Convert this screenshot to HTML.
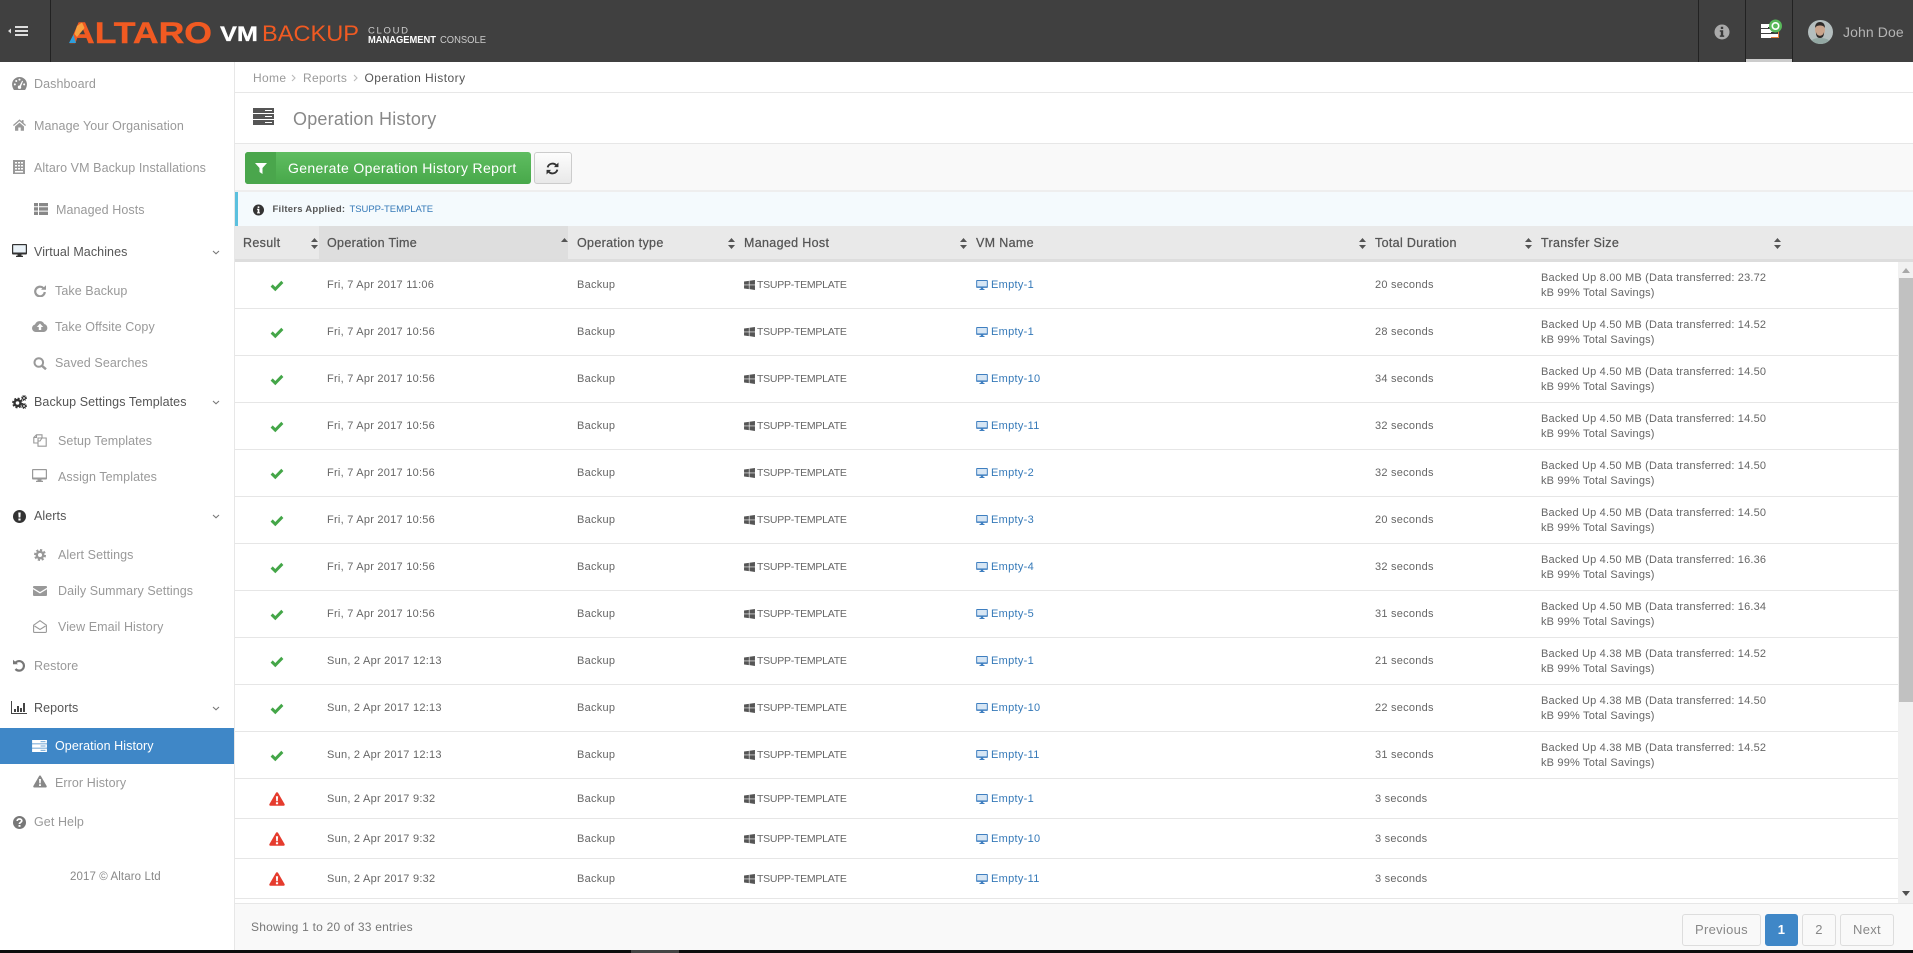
<!DOCTYPE html>
<html lang="en"><head><meta charset="utf-8"><title>Operation History</title>
<style>
html,body{margin:0;padding:0}
body{position:relative;width:1913px;height:953px;overflow:hidden;background:#fff;font-family:"Liberation Sans",sans-serif;color:#666}
.a,.s,.r,.r span,.r a,.r svg,.r div{position:absolute}
.s{white-space:nowrap;line-height:20px;font-size:12.5px;letter-spacing:.08px;color:#999}
.d{color:#555}
.th{position:absolute;top:233px;white-space:nowrap;line-height:20px;font-size:12.5px;letter-spacing:.33px;font-weight:normal;-webkit-text-stroke:.25px #555;color:#555}
.r{left:235px;width:1663px;height:46px;border-bottom:1px solid #e6e6e6;font-size:11px;letter-spacing:.25px;color:#666;line-height:47px;white-space:nowrap}
.r.e{height:39px;line-height:41px}
.r a{color:#3579b8;text-decoration:none;left:756px;letter-spacing:.3px}
.r .z{left:1306px;top:9px;line-height:15px;white-space:nowrap;font-size:11px;letter-spacing:.18px}
.r svg.c{left:35px;top:18px}
.r svg.w{left:509px;top:18px}
.r svg.m{left:741px;top:18px}
.r.e svg.c{left:34px;top:13px}
.r.e svg.w{top:15px}
.r.e svg.m{top:15px}
.t1{left:92px}.t2{left:342px}.t3{left:522px;font-size:10.5px;letter-spacing:-.25px}.t4{left:1140px}
.pg{position:absolute;top:914px;height:30px;border:1px solid #ddd;border-radius:3px;line-height:30px;text-align:center;font-size:13px;letter-spacing:.3px;color:#888;background:#f9f9f9;box-sizing:content-box}
</style></head><body>
<svg width="0" height="0" style="position:absolute">
<symbol id="chk" viewBox="0 0 14 12"><path fill="#44a648" d="M.6 6.600 2.700 4.400 5.300 7 11.300.8 13.400 3 5.300 11.200z"/></symbol>
<symbol id="warn" viewBox="0 0 16 14"><path fill="#e53c2e" d="M8 .2c.5 0 .9.3 1.100.7l6.500 11.200c.4.800-.1 1.700-1 1.700H1.400c-.9 0-1.400-.9-1-1.700L6.900.9C7.100.5 7.500.2 8 .2z"/><path fill="#fff" d="M6.900 4.200h2.200l-.3 5H7.200zM6.900 10.200h2.200v2H6.900z"/></symbol>
<symbol id="win" viewBox="0 0 12 11"><path fill="#555" d="M0 1.700 5.300.9v4.200H0zM6 .8 12 0v5.100H6zM0 5.800h5.300v4.300L0 9.300zM6 5.800h6V11l-6-.9z"/></symbol>
<symbol id="mon" viewBox="0 0 14 12"><path fill="#3f7fc0" d="M1 0h12a1 1 0 0 1 1 1v7.500a1 1 0 0 1-1 1H8.500v1.300h1.500V12H4v-1.200h1.500V9.500H1a1 1 0 0 1-1-1V1a1 1 0 0 1 1-1z"/><path fill="#d7e6f4" d="M1.200 1.200h11.600v6.500H1.200z"/></symbol>
<symbol id="sort" viewBox="0 0 7 11"><path fill="#555" d="M3.500 0 7 4H0zM0 7h7l-3.500 4z"/></symbol>
<symbol id="srv" viewBox="0 0 21 17"><path d="M0 0h21v5H0zM0 6h21v5H0zM0 12h21v5H0z"/><path fill="#fff" d="M12 2h7v1h-7zM12 8h7v1h-7zM12 14h7v1h-7z"/></symbol>
</svg>

<!-- top bar -->
<div class="a" style="left:0;top:0;width:1913px;height:62px;background:#404040"></div>
<div class="a" style="left:50px;top:0;width:1px;height:62px;background:#222"></div>
<div class="a" style="left:1698px;top:0;width:1px;height:62px;background:#222"></div>
<div class="a" style="left:1745px;top:0;width:1px;height:62px;background:#222"></div>
<div class="a" style="left:1792px;top:0;width:1px;height:62px;background:#222"></div>
<div class="a" style="left:1746px;top:59px;width:46px;height:3px;background:#ccc"></div>
<svg class="a" style="left:8px;top:25px" width="21" height="12" viewBox="0 0 21 12"><path fill="#ddd" d="M0 6 3 3.500v5zM7 1h13v2H7zM7 5h13v2H7zM7 9h13v2H7z"/></svg>
<svg class="a" style="left:60px;top:15px" width="440" height="35" viewBox="60 15 440 35" font-family="Liberation Sans, sans-serif">
<text x="69" y="43" font-size="30" font-weight="bold" fill="#f15a22" stroke="#f15a22" stroke-width=".4" textLength="143" lengthAdjust="spacingAndGlyphs">ALTARO</text>
<path fill="#f9a03f" d="M77 26 82 22.500 84.500 28 77 37 74.500 34z"/>
<path fill="#2e9fdc" d="M69 43 73.500 34.500 76 43z"/>
<text x="220" y="41" font-size="21" font-weight="bold" fill="#fff" stroke="#fff" stroke-width=".3" textLength="38" lengthAdjust="spacingAndGlyphs">VM</text>
<text x="262" y="41" font-size="22" fill="#f15a22" textLength="97" lengthAdjust="spacingAndGlyphs">BACKUP</text>
<text x="368" y="33.500" font-size="9.500" fill="#ccc" textLength="40">CLOUD</text>
<text x="368" y="43" font-size="10.500" font-weight="bold" fill="#fff" textLength="68" lengthAdjust="spacingAndGlyphs">MANAGEMENT</text>
<text x="440" y="43" font-size="10.500" fill="#ccc" textLength="46" lengthAdjust="spacingAndGlyphs">CONSOLE</text>
</svg>
<svg class="a" style="left:1714px;top:24px" width="16" height="16" viewBox="0 0 16 16"><circle cx="8" cy="8" r="7.500" fill="#aaa"/><path fill="#3a3a3a" d="M6.800 2.800h2.400v2.200H6.800zM5.800 6.200h3.400v5.200h1v1.500H5.800v-1.500h1V7.700h-1z"/></svg>
<svg class="a" style="left:1761px;top:19px" width="22" height="20" viewBox="0 0 22 20"><path fill="#fff" d="M0 5h18v4H0zM0 10h18v4H0zM0 15h18v4H0z"/><path fill="#333" d="M7 8h10v1H7zM10 13h7v1H10z"/><path fill="#e8803c" d="M17 10h1v9h-1zM10 18h8v1h-8z"/><circle cx="14.500" cy="7" r="6.500" fill="#58b95a"/><circle cx="14.500" cy="7" r="3.200" fill="none" stroke="#fff" stroke-width="1.600"/></svg>
<svg class="a" style="left:1808px;top:20px" width="25" height="24" viewBox="0 0 25 24"><defs><clipPath id="av"><ellipse cx="12.500" cy="12" rx="12.500" ry="12"/></clipPath></defs><g clip-path="url(#av)"><rect width="25" height="24" fill="#b4bebe"/><path fill="#93a8a3" d="M2 24c1-5 5-6 10-6s10 1 11 6z"/><ellipse cx="12" cy="10" rx="5" ry="6.500" fill="#c9a48c"/><path fill="#2e2a28" d="M7 8c0-4 2-6 5-6s5 2 5 6c-1-2-3-2.500-5-2.500S8 6 7 8zM8 12c1 5 7 5 8 0 0 4-1 6-4 6s-4-2-4-6z"/></g></svg>
<div class="s" style="left:1843px;top:21.500px;font-size:14px;letter-spacing:.1px;color:#b5b5b5">John Doe</div>

<!-- sidebar -->
<div class="a" style="left:234px;top:62px;width:1px;height:888px;background:#e7e7e7"></div>

<svg class="a" style="left:12px;top:77px" width="15" height="13" viewBox="0 0 16 14"><path fill="#888" d="M8 0a8 8 0 0 0-8 8c0 2.300.9 4.400 2 6h12c1.100-1.600 2-3.700 2-6a8 8 0 0 0-8-8z"/><g fill="#fff"><circle cx="3" cy="8" r="1.100"/><circle cx="4.500" cy="4.300" r="1.100"/><circle cx="8" cy="2.800" r="1.100"/><circle cx="13" cy="8" r="1.100"/><circle cx="8" cy="11" r="1.800"/><path d="M7.500 10.500 10.800 4l1 .4-2.600 6.800z"/></g></svg>
<div class="s" style="left:34px;top:74px">Dashboard</div>

<svg class="a" style="left:13px;top:119px" width="13" height="12" viewBox="0 0 16 14"><path fill="#999" d="M8 0 0 7l1 1.200L8 2.300l7 5.900L16 7l-3-2.600V1h-2.200v1.500zM2.500 8.800V14h4v-4h3v4h4V8.800L8 4z"/></svg>
<div class="s" style="left:34px;top:116px">Manage Your Organisation</div>

<svg class="a" style="left:13px;top:160px" width="12" height="14" viewBox="0 0 12 14"><path fill="#999" d="M0 0h12v14H0z"/><path fill="#fff" d="M2 2h2v1.500H2zM5 2h2v1.500H5zM8 2h2v1.500H8zM2 5h2v1.500H2zM5 5h2v1.500H5zM8 5h2v1.500H8zM2 8h2v1.500H2zM5 8h2v1.500H5zM8 8h2v1.500H8zM2 11h8v1.500H2z"/></svg>
<div class="s" style="left:34px;top:158px">Altaro VM Backup Installations</div>

<svg class="a" style="left:34px;top:203px" width="14" height="12" viewBox="0 0 14 12"><path fill="#888" d="M0 0h4v3.300H0zM5 0h9v3.300H5zM0 4.300h4v3.300H0zM5 4.300h9v3.300H5zM0 8.600h4V12H0zM5 8.600h9V12H5z"/></svg>
<div class="s" style="left:56px;top:200px">Managed Hosts</div>

<svg class="a" style="left:12px;top:244px" width="15" height="13" viewBox="0 0 15 13"><path fill="#333" d="M1 0h13a1 1 0 0 1 1 1v8.500a1 1 0 0 1-1 1H9.500v1.300H11V13H4v-1.200h1.500v-1.300H1a1 1 0 0 1-1-1V1a1 1 0 0 1 1-1z"/><path fill="#eaf2f8" d="M1.200 1.200h12.600v7.300H1.200z"/></svg>
<div class="s d" style="left:34px;top:242px">Virtual Machines</div>
<svg class="a" style="left:212px;top:250px" width="8" height="5" viewBox="0 0 8 5"><path fill="none" stroke="#777" stroke-width="1.100" d="M1 1l3 2.800L7 1"/></svg>

<svg class="a" style="left:34px;top:285px" width="12" height="12" viewBox="0 0 12 12"><path fill="none" stroke="#999" stroke-width="2.200" d="M9.300 3A4.800 4.800 0 1 0 10.800 7"/><path fill="#999" d="M7 4.800 12 .2v4.600z"/></svg>
<div class="s" style="left:55px;top:281px">Take Backup</div>

<svg class="a" style="left:32px;top:320px" width="16" height="12" viewBox="0 0 16 12"><path fill="#999" d="M4 12a3.800 3.800 0 0 1-1-7.500A5 5 0 0 1 12.300 4 4.100 4.100 0 0 1 12 12z"/><path fill="#fff" d="M8 3.500 11.200 7H9.200v3H6.800V7H4.800z"/></svg>
<div class="s" style="left:55px;top:317px">Take Offsite Copy</div>

<svg class="a" style="left:33px;top:357px" width="14" height="13" viewBox="0 0 14 13"><circle cx="5.800" cy="5.500" r="4.300" fill="none" stroke="#999" stroke-width="2"/><path stroke="#999" stroke-width="2.400" d="M9 8.800 13 12.300"/></svg>
<div class="s" style="left:55px;top:353px">Saved Searches</div>

<svg class="a" style="left:12px;top:395px" width="15" height="14" viewBox="0 0 15 14"><g fill="none" stroke="#333"><circle cx="5.500" cy="8" r="3" stroke-width="2.400"/><circle cx="5.500" cy="8" r="4.700" stroke-width="1.400" stroke-dasharray="2 1.700"/><circle cx="12" cy="3" r="1.500" stroke-width="1.200"/><circle cx="12" cy="3" r="2.500" stroke-width=".9" stroke-dasharray="1 1"/><circle cx="12" cy="11" r="1.500" stroke-width="1.200"/><circle cx="12" cy="11" r="2.500" stroke-width=".9" stroke-dasharray="1 1"/></g></svg>
<div class="s d" style="left:34px;top:392px">Backup Settings Templates</div>
<svg class="a" style="left:212px;top:400px" width="8" height="5" viewBox="0 0 8 5"><path fill="none" stroke="#777" stroke-width="1.100" d="M1 1l3 2.800L7 1"/></svg>

<svg class="a" style="left:33px;top:434px" width="14" height="13" viewBox="0 0 14 13"><path fill="none" stroke="#999" stroke-width="1.100" d="M5 9H.8V3.500L3.500.8H9v3M5 4h4.500l3.700 0v8.200H5z"/><path fill="none" stroke="#999" stroke-width="1.100" d="M.8 3.500h2.700V.8M9 4 7 7H5"/></svg>
<div class="s" style="left:58px;top:431px">Setup Templates</div>

<svg class="a" style="left:32px;top:469px" width="15" height="13" viewBox="0 0 15 13"><path fill="#999" d="M1 0h13a1 1 0 0 1 1 1v8.500a1 1 0 0 1-1 1H9.500v1.300H11V13H4v-1.200h1.500v-1.300H1a1 1 0 0 1-1-1V1a1 1 0 0 1 1-1z"/><path fill="#fff" d="M1.200 1.200h12.600v7.300H1.200z"/></svg>
<div class="s" style="left:58px;top:467px">Assign Templates</div>

<svg class="a" style="left:12.500px;top:509.500px" width="13" height="13" viewBox="0 0 13 13"><circle cx="6.500" cy="6.500" r="6.500" fill="#333"/><path fill="#fff" d="M5.300 2.500h2.400l-.3 5H5.600zM5.400 8.500h2.200v2H5.400z"/></svg>
<div class="s d" style="left:34px;top:506px">Alerts</div>
<svg class="a" style="left:212px;top:514px" width="8" height="5" viewBox="0 0 8 5"><path fill="none" stroke="#777" stroke-width="1.100" d="M1 1l3 2.800L7 1"/></svg>

<svg class="a" style="left:34px;top:549px" width="12" height="12" viewBox="0 0 12 12"><circle cx="6" cy="6" r="3.200" fill="none" stroke="#999" stroke-width="2.400"/><circle cx="6" cy="6" r="5" fill="none" stroke="#999" stroke-width="2" stroke-dasharray="2.200 1.700"/></svg>
<div class="s" style="left:58px;top:545px">Alert Settings</div>

<svg class="a" style="left:33px;top:586px" width="14" height="10" viewBox="0 0 14 10"><path fill="#999" d="M1 0h12a1 1 0 0 1 1 1v.8L7 6 0 1.800V1a1 1 0 0 1 1-1zM0 3.300 7 7.500l7-4.200V9a1 1 0 0 1-1 1H1a1 1 0 0 1-1-1z"/></svg>
<div class="s" style="left:58px;top:581px">Daily Summary Settings</div>

<svg class="a" style="left:33px;top:620px" width="14" height="13" viewBox="0 0 14 13"><path fill="none" stroke="#999" stroke-width="1.100" d="M.6 5.200 7 .7l6.400 4.500v6.400a.8.800 0 0 1-.8.800H1.400a.8.800 0 0 1-.8-.8zM1.500 6 7 9.500 12.500 6"/></svg>
<div class="s" style="left:58px;top:617px">View Email History</div>

<svg class="a" style="left:13px;top:659px" width="12" height="13" viewBox="0 0 12 12"><path fill="none" stroke="#777" stroke-width="2.200" d="M2.700 3A4.800 4.800 0 1 1 2.500 9.500"/><path fill="#777" d="M5 4.800 0 .2v4.600z"/></svg>
<div class="s" style="left:34px;top:656px">Restore</div>

<svg class="a" style="left:11px;top:701px" width="16" height="13" viewBox="0 0 16 13"><path fill="#444" d="M0 0h1v12h15v1H0zM3 8h2v3H3zM6 5h2v6H6zM9 7h2v4H9zM12 2h2v9h-2z"/></svg>
<div class="s d" style="left:34px;top:698px">Reports</div>
<svg class="a" style="left:212px;top:706px" width="8" height="5" viewBox="0 0 8 5"><path fill="none" stroke="#777" stroke-width="1.100" d="M1 1l3 2.800L7 1"/></svg>

<div class="a" style="left:0;top:728px;width:234px;height:36px;background:#3f87c7"></div>
<svg class="a" style="left:32px;top:740px" width="15" height="12" viewBox="0 0 21 17"><path fill="#fff" d="M0 0h21v5H0zM0 6h21v5H0zM0 12h21v5H0z"/><path fill="#3f87c7" d="M12 2h7v1h-7zM12 8h7v1h-7zM12 14h7v1h-7z"/></svg>
<div class="s" style="left:55px;top:736px;color:#fff">Operation History</div>

<svg class="a" style="left:33px;top:775px" width="14" height="13" viewBox="0 0 16 14"><path fill="#888" d="M8 .2c.5 0 .9.3 1.100.7l6.500 11.200c.4.800-.1 1.700-1 1.700H1.400c-.9 0-1.400-.9-1-1.700L6.900.9C7.100.5 7.500.2 8 .2z"/><path fill="#fff" d="M6.900 4.200h2.200l-.3 5H7.200zM6.900 10.200h2.200v2H6.900z"/></svg>
<div class="s" style="left:55px;top:773px">Error History</div>

<svg class="a" style="left:12.500px;top:815.500px" width="13" height="13" viewBox="0 0 13 13"><circle cx="6.500" cy="6.500" r="6.500" fill="#777"/><path fill="none" stroke="#fff" stroke-width="1.700" d="M4.200 5c0-1.300 1-2 2.300-2s2.300.8 2.300 1.900C8.800 6.300 6.500 6.300 6.500 8"/><path fill="#fff" d="M5.500 9h2v1.800h-2z"/></svg>
<div class="s" style="left:34px;top:812px">Get Help</div>

<div class="s" style="left:70px;top:867px;font-size:11.500px;letter-spacing:.1px;color:#888">2017 © Altaro Ltd</div>

<!-- breadcrumb -->
<div class="s" style="left:253px;top:68px;font-size:12px;letter-spacing:.35px">Home</div>
<svg class="a" style="left:291px;top:74px" width="5" height="8" viewBox="0 0 5 8"><path fill="none" stroke="#bbb" stroke-width="1.100" d="M1 1l3 3-3 3"/></svg>
<div class="s" style="left:303px;top:68px;font-size:12px;letter-spacing:.3px">Reports</div>
<svg class="a" style="left:353px;top:74px" width="5" height="8" viewBox="0 0 5 8"><path fill="none" stroke="#bbb" stroke-width="1.100" d="M1 1l3 3-3 3"/></svg>
<div class="s" style="left:364.500px;top:68px;font-size:12px;letter-spacing:.45px;color:#555">Operation History</div>
<div class="a" style="left:235px;top:92px;width:1678px;height:1px;background:#e7e7e7"></div>

<!-- title -->
<svg class="a" style="left:253px;top:108px;fill:#555" width="21" height="17"><use href="#srv"/></svg>
<div class="s" style="left:293px;top:109px;font-size:18px;letter-spacing:.2px;color:#888">Operation History</div>
<div class="a" style="left:235px;top:143px;width:1678px;height:1px;background:#e7e7e7"></div>

<!-- toolbar -->
<div class="a" style="left:235px;top:144px;width:1678px;height:46px;background:#f9f9f9"></div>
<div class="a" style="left:235px;top:190px;width:1678px;height:2px;background:#eee"></div>
<div class="a" style="left:245px;top:152px;width:286px;height:32px;border-radius:3px;background:linear-gradient(#5fbd61,#48a84a)"></div>
<div class="a" style="left:245px;top:152px;width:31px;height:32px;border-radius:3px 0 0 3px;background:#4aa64c"></div>
<svg class="a" style="left:255px;top:163px" width="12" height="11" viewBox="0 0 12 11"><path fill="#fff" d="M0 0h12L7.500 5v6l-3-2V5z"/></svg>
<div class="s" style="left:288px;top:157.500px;font-size:14px;letter-spacing:.35px;color:#fff">Generate Operation History Report</div>
<div class="a" style="left:534px;top:152px;width:36px;height:30px;border:1px solid #ccc;border-radius:3px;background:linear-gradient(#fdfdfd,#e9e9e9)"></div>
<svg class="a" style="left:546px;top:162px" width="13" height="13" viewBox="0 0 12 12"><path fill="none" stroke="#333" stroke-width="1.700" d="M1.500 5A4.700 4.700 0 0 1 9.500 3M10.500 7A4.700 4.700 0 0 1 2.500 9"/><path fill="#333" d="M11.500.5v4.200H7.300zM.5 11.500V7.300h4.200z"/></svg>

<!-- filters -->
<div class="a" style="left:235px;top:192px;width:1678px;height:34px;background:#f4fafd"></div>
<div class="a" style="left:235px;top:192px;width:3px;height:34px;background:#5bc0de"></div>
<svg class="a" style="left:253px;top:204px" width="11" height="12" viewBox="0 0 16 16"><circle cx="8" cy="8" r="8" fill="#333"/><path fill="#fff" d="M6.800 2.800h2.400v2.200H6.800zM5.800 6.200h3.400v5.200h1v1.500H5.800v-1.500h1V7.700h-1z"/></svg>
<div class="s" style="left:272.500px;top:199.500px;font-size:9.500px;letter-spacing:.25px;font-weight:bold;color:#555">Filters Applied:</div>
<div class="s" style="left:349.500px;top:199.500px;font-size:9.500px;letter-spacing:-.05px;color:#3579b8">TSUPP-TEMPLATE</div>

<!-- table header -->
<div class="a" style="left:235px;top:226px;width:1678px;height:33px;background:#e9e9e9"></div>
<div class="a" style="left:319px;top:226px;width:249px;height:33px;background:#dedede"></div>
<div class="a" style="left:235px;top:259px;width:1678px;height:3px;background:#ddd"></div>
<div class="th" style="left:243px">Result</div>
<div class="th" style="left:327px">Operation Time</div>
<div class="th" style="left:577px">Operation type</div>
<div class="th" style="left:744px">Managed Host</div>
<div class="th" style="left:976px">VM Name</div>
<div class="th" style="left:1375px">Total Duration</div>
<div class="th" style="left:1541px">Transfer Size</div>
<svg class="a" style="left:310.500px;top:238px" width="7" height="11"><use href="#sort"/></svg>
<svg class="a" style="left:560.500px;top:238px" width="7" height="5" viewBox="0 0 7 5"><path fill="#555" d="M3.500 0 7 4H0z"/></svg>
<svg class="a" style="left:727.500px;top:238px" width="7" height="11"><use href="#sort"/></svg>
<svg class="a" style="left:960px;top:238px" width="7" height="11"><use href="#sort"/></svg>
<svg class="a" style="left:1359px;top:238px" width="7" height="11"><use href="#sort"/></svg>
<svg class="a" style="left:1525px;top:238px" width="7" height="11"><use href="#sort"/></svg>
<svg class="a" style="left:1773.500px;top:238px" width="7" height="11"><use href="#sort"/></svg>

<!-- rows -->
<div class="r" style="top:262px"><svg class="c" width="14" height="12"><use href="#chk"/></svg><span class="t1">Fri, 7 Apr 2017 11:06</span><span class="t2">Backup</span><svg class="w" width="11" height="10"><use href="#win"/></svg><span class="t3">TSUPP-TEMPLATE</span><svg class="m" width="12" height="10"><use href="#mon"/></svg><a>Empty-1</a><span class="t4">20 seconds</span><div class="z">Backed Up 8.00 MB (Data transferred: 23.72<br>kB 99% Total Savings)</div></div>
<div class="r" style="top:309px"><svg class="c" width="14" height="12"><use href="#chk"/></svg><span class="t1">Fri, 7 Apr 2017 10:56</span><span class="t2">Backup</span><svg class="w" width="11" height="10"><use href="#win"/></svg><span class="t3">TSUPP-TEMPLATE</span><svg class="m" width="12" height="10"><use href="#mon"/></svg><a>Empty-1</a><span class="t4">28 seconds</span><div class="z">Backed Up 4.50 MB (Data transferred: 14.52<br>kB 99% Total Savings)</div></div>
<div class="r" style="top:356px"><svg class="c" width="14" height="12"><use href="#chk"/></svg><span class="t1">Fri, 7 Apr 2017 10:56</span><span class="t2">Backup</span><svg class="w" width="11" height="10"><use href="#win"/></svg><span class="t3">TSUPP-TEMPLATE</span><svg class="m" width="12" height="10"><use href="#mon"/></svg><a>Empty-10</a><span class="t4">34 seconds</span><div class="z">Backed Up 4.50 MB (Data transferred: 14.50<br>kB 99% Total Savings)</div></div>
<div class="r" style="top:403px"><svg class="c" width="14" height="12"><use href="#chk"/></svg><span class="t1">Fri, 7 Apr 2017 10:56</span><span class="t2">Backup</span><svg class="w" width="11" height="10"><use href="#win"/></svg><span class="t3">TSUPP-TEMPLATE</span><svg class="m" width="12" height="10"><use href="#mon"/></svg><a>Empty-11</a><span class="t4">32 seconds</span><div class="z">Backed Up 4.50 MB (Data transferred: 14.50<br>kB 99% Total Savings)</div></div>
<div class="r" style="top:450px"><svg class="c" width="14" height="12"><use href="#chk"/></svg><span class="t1">Fri, 7 Apr 2017 10:56</span><span class="t2">Backup</span><svg class="w" width="11" height="10"><use href="#win"/></svg><span class="t3">TSUPP-TEMPLATE</span><svg class="m" width="12" height="10"><use href="#mon"/></svg><a>Empty-2</a><span class="t4">32 seconds</span><div class="z">Backed Up 4.50 MB (Data transferred: 14.50<br>kB 99% Total Savings)</div></div>
<div class="r" style="top:497px"><svg class="c" width="14" height="12"><use href="#chk"/></svg><span class="t1">Fri, 7 Apr 2017 10:56</span><span class="t2">Backup</span><svg class="w" width="11" height="10"><use href="#win"/></svg><span class="t3">TSUPP-TEMPLATE</span><svg class="m" width="12" height="10"><use href="#mon"/></svg><a>Empty-3</a><span class="t4">20 seconds</span><div class="z">Backed Up 4.50 MB (Data transferred: 14.50<br>kB 99% Total Savings)</div></div>
<div class="r" style="top:544px"><svg class="c" width="14" height="12"><use href="#chk"/></svg><span class="t1">Fri, 7 Apr 2017 10:56</span><span class="t2">Backup</span><svg class="w" width="11" height="10"><use href="#win"/></svg><span class="t3">TSUPP-TEMPLATE</span><svg class="m" width="12" height="10"><use href="#mon"/></svg><a>Empty-4</a><span class="t4">32 seconds</span><div class="z">Backed Up 4.50 MB (Data transferred: 16.36<br>kB 99% Total Savings)</div></div>
<div class="r" style="top:591px"><svg class="c" width="14" height="12"><use href="#chk"/></svg><span class="t1">Fri, 7 Apr 2017 10:56</span><span class="t2">Backup</span><svg class="w" width="11" height="10"><use href="#win"/></svg><span class="t3">TSUPP-TEMPLATE</span><svg class="m" width="12" height="10"><use href="#mon"/></svg><a>Empty-5</a><span class="t4">31 seconds</span><div class="z">Backed Up 4.50 MB (Data transferred: 16.34<br>kB 99% Total Savings)</div></div>
<div class="r" style="top:638px"><svg class="c" width="14" height="12"><use href="#chk"/></svg><span class="t1">Sun, 2 Apr 2017 12:13</span><span class="t2">Backup</span><svg class="w" width="11" height="10"><use href="#win"/></svg><span class="t3">TSUPP-TEMPLATE</span><svg class="m" width="12" height="10"><use href="#mon"/></svg><a>Empty-1</a><span class="t4">21 seconds</span><div class="z">Backed Up 4.38 MB (Data transferred: 14.52<br>kB 99% Total Savings)</div></div>
<div class="r" style="top:685px"><svg class="c" width="14" height="12"><use href="#chk"/></svg><span class="t1">Sun, 2 Apr 2017 12:13</span><span class="t2">Backup</span><svg class="w" width="11" height="10"><use href="#win"/></svg><span class="t3">TSUPP-TEMPLATE</span><svg class="m" width="12" height="10"><use href="#mon"/></svg><a>Empty-10</a><span class="t4">22 seconds</span><div class="z">Backed Up 4.38 MB (Data transferred: 14.50<br>kB 99% Total Savings)</div></div>
<div class="r" style="top:732px"><svg class="c" width="14" height="12"><use href="#chk"/></svg><span class="t1">Sun, 2 Apr 2017 12:13</span><span class="t2">Backup</span><svg class="w" width="11" height="10"><use href="#win"/></svg><span class="t3">TSUPP-TEMPLATE</span><svg class="m" width="12" height="10"><use href="#mon"/></svg><a>Empty-11</a><span class="t4">31 seconds</span><div class="z">Backed Up 4.38 MB (Data transferred: 14.52<br>kB 99% Total Savings)</div></div>
<div class="r e" style="top:779px"><svg class="c" width="16" height="14"><use href="#warn"/></svg><span class="t1">Sun, 2 Apr 2017 9:32</span><span class="t2">Backup</span><svg class="w" width="11" height="10"><use href="#win"/></svg><span class="t3">TSUPP-TEMPLATE</span><svg class="m" width="12" height="10"><use href="#mon"/></svg><a>Empty-1</a><span class="t4">3 seconds</span></div>
<div class="r e" style="top:819px"><svg class="c" width="16" height="14"><use href="#warn"/></svg><span class="t1">Sun, 2 Apr 2017 9:32</span><span class="t2">Backup</span><svg class="w" width="11" height="10"><use href="#win"/></svg><span class="t3">TSUPP-TEMPLATE</span><svg class="m" width="12" height="10"><use href="#mon"/></svg><a>Empty-10</a><span class="t4">3 seconds</span></div>
<div class="r e" style="top:859px"><svg class="c" width="16" height="14"><use href="#warn"/></svg><span class="t1">Sun, 2 Apr 2017 9:32</span><span class="t2">Backup</span><svg class="w" width="11" height="10"><use href="#win"/></svg><span class="t3">TSUPP-TEMPLATE</span><svg class="m" width="12" height="10"><use href="#mon"/></svg><a>Empty-11</a><span class="t4">3 seconds</span></div>

<!-- scrollbar -->
<div class="a" style="left:1898px;top:262px;width:15px;height:641px;background:#f1f1f1"></div>
<div class="a" style="left:1899px;top:278px;width:14px;height:424px;background:#c1c1c1"></div>
<svg class="a" style="left:1902px;top:268px" width="8" height="5" viewBox="0 0 8 5"><path fill="#a8a8a8" d="M4 0l4 5H0z"/></svg>
<svg class="a" style="left:1902px;top:891px" width="8" height="5" viewBox="0 0 8 5"><path fill="#505050" d="M4 5 8 0H0z"/></svg>

<!-- footer -->
<div class="a" style="left:235px;top:903px;width:1678px;height:47px;background:#f9f9f9;border-top:1px solid #e7e7e7;box-sizing:border-box"></div>
<div class="s" style="left:251px;top:917px;font-size:12px;letter-spacing:.22px;color:#777">Showing 1 to 20 of 33 entries</div>
<div class="pg" style="left:1682px;width:77px">Previous</div>
<div class="pg" style="left:1765px;width:31px;background:#3f87c7;border-color:#3f87c7;color:#fff;font-weight:bold">1</div>
<div class="pg" style="left:1802px;width:32px">2</div>
<div class="pg" style="left:1840px;width:52px">Next</div>

<!-- bottom strip -->
<div class="a" style="left:0;top:950px;width:1913px;height:3px;background:#0c0c0c"></div>
<div class="a" style="left:631px;top:950px;width:48px;height:3px;background:#444"></div>
</body></html>
